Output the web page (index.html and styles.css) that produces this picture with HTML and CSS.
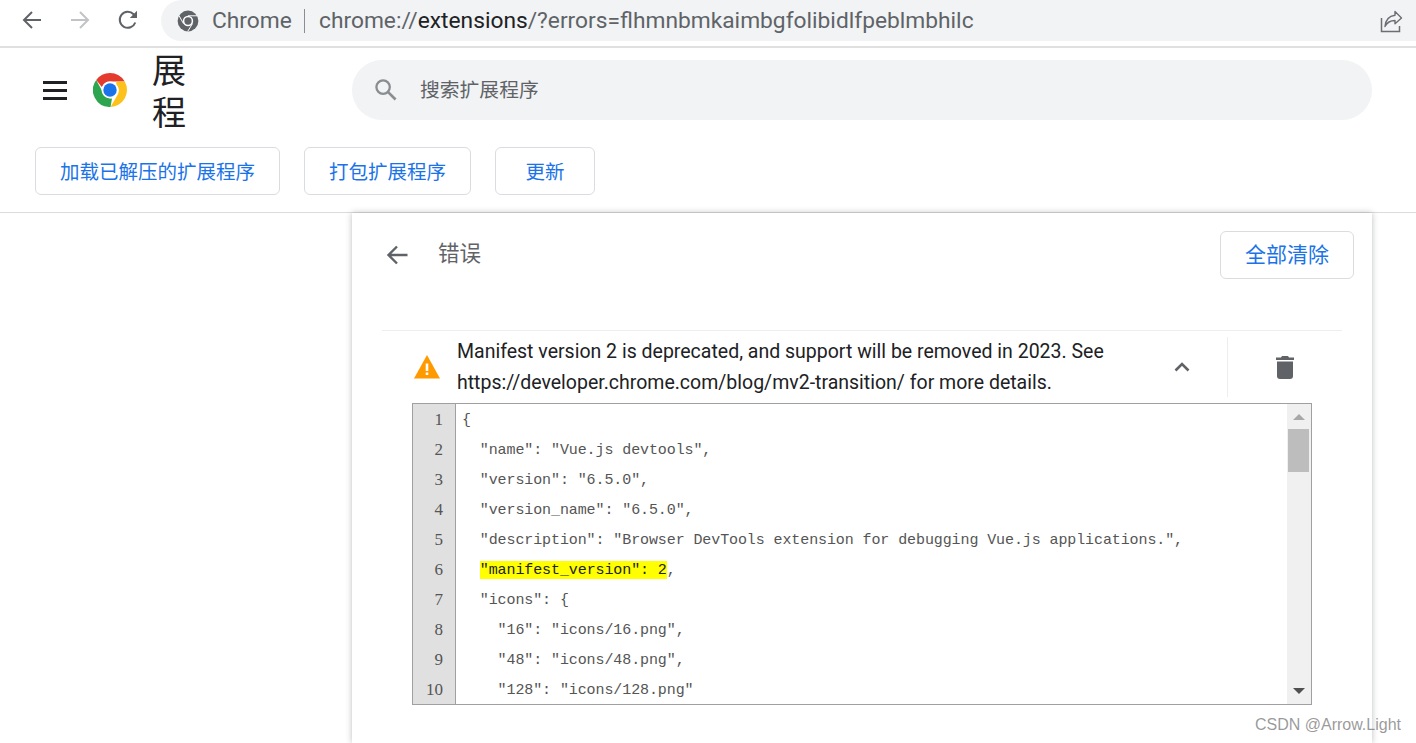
FILE: index.html
```html
<!DOCTYPE html>
<html lang="zh">
<head>
<meta charset="utf-8">
<title>扩展程序</title>
<link rel="stylesheet" href="styles.css">
</head>
<body>
<div class="browser-bar">
  <div class="nav">
    <svg class="nav-icon" viewBox="0 0 24 24"><path d="M21 12H4.500M12 4l-8 8 8 8" fill="none" stroke="#5f6368" stroke-width="2"/></svg>
    <svg class="nav-icon" viewBox="0 0 24 24"><path d="M3 12h16.500M12 4l8 8-8 8" fill="none" stroke="#c1c3c6" stroke-width="2"/></svg>
    <svg class="nav-icon" viewBox="0 0 24 24"><path d="M19.300 14.500A8 8 0 1 1 17.600 6.300L20 8.600" fill="none" stroke="#5f6368" stroke-width="2"/><path d="M21 2.800V10h-7.200z" fill="#5f6368"/></svg>
  </div>
  <div class="omnibox">
    <svg class="omni-logo" viewBox="0 0 36 36">
      <circle cx="18" cy="18" r="17" fill="#5f6368"/>
      <circle cx="18" cy="18" r="8.500" fill="#fff"/>
      <circle cx="18" cy="18" r="6" fill="#5f6368"/>
      <path d="M18 9.500H33M10.600 22.300L3.500 9.500M25.400 22.300L17.500 35" stroke="#fff" stroke-width="1.600" fill="none"/>
    </svg>
    <span class="omni-site">Chrome</span>
    <span class="omni-sep"></span>
    <span class="omni-url">chrome://<b>extensions</b>/?errors=flhmnbmkaimbgfolibidlfpeblmbhilc</span>
    <svg class="share" viewBox="0 0 24 24"><path d="M2.500 9V22.500H20.500V17" fill="none" stroke="#6b6e72" stroke-width="1.500"/><path d="M16 2.500l6.500 6.500-6.500 5.800V11.500C11 11.500 8 13.500 6 17.500 6.500 11 10 7 16 6.200z" fill="none" stroke="#6b6e72" stroke-width="1.400" stroke-linejoin="round"/></svg>
  </div>
</div>

<header class="header">
  <div class="header-top">
    <svg class="menu" viewBox="0 0 24 19"><path d="M0 0h24v3H0zM0 8h24v3H0zM0 16h24v3H0z" fill="#202124"/></svg>
    <svg class="logo" viewBox="1 1 34 34">
      <path d="M18 1a17 17 0 0 1 14.700 8.500H18a8.500 8.500 0 0 0-8 5.700L4.200 8A17 17 0 0 1 18 1z" fill="#e53b2e"/>
      <path d="M32.700 9.500A17 17 0 0 1 18.500 35l7-12a8.500 8.500 0 0 0-1.200-10.500V9.500z" fill="#fcc21b"/>
      <path d="M4.200 8L11 20.500a8.500 8.500 0 0 0 9 6L18.500 35A17 17 0 0 1 4.200 8z" fill="#2da44e"/>
      <circle cx="18" cy="18" r="8.500" fill="#fff"/>
      <circle cx="18" cy="18" r="6.700" fill="#1a73e8"/>
    </svg>
    <h1 class="title">展程</h1>
    <div class="search">
      <svg class="search-icon" viewBox="0 0 24 24"><circle cx="9.500" cy="9.500" r="7" fill="none" stroke="#8a8d91" stroke-width="2.400"/><path d="M14.500 14.500l8 8" stroke="#8a8d91" stroke-width="2.800"/></svg>
      <span class="search-text">搜索扩展程序</span>
    </div>
  </div>
  <div class="actions">
    <button class="btn">加载已解压的扩展程序</button>
    <button class="btn">打包扩展程序</button>
    <button class="btn">更新</button>
  </div>
</header>

<main class="main">
  <section class="card">
    <div class="card-head">
      <svg class="back" viewBox="0 0 24 24"><path d="M22.500 12H3.500M12 3.500L3.500 12l8.500 8.500" fill="none" stroke="#5f6368" stroke-width="2.400"/></svg>
      <h2 class="card-title">错误</h2>
      <button class="btn btn-clear">全部清除</button>
    </div>
    <div class="item">
      <svg class="warn" viewBox="0 0 26 24"><path d="M13 .500L26 24H0z" fill="#f90"/><path d="M11.700 9h2.600v7.500h-2.600zM11.700 18h2.600v2.600h-2.600z" fill="#fff"/></svg>
      <p class="message">Manifest version 2 is deprecated, and support will be removed in 2023. See https://developer.chrome.com/blog/mv2-transition/ for more details.</p>
      <div class="chevron-cell">
        <svg class="chevron" viewBox="0 0 16 10"><path d="M1.500 8.500L8 2l6.500 6.500" fill="none" stroke="#5f6368" stroke-width="2.600"/></svg>
      </div>
      <div class="trash-cell">
        <svg class="trash" viewBox="0 0 18 24"><path d="M6 1h6l1 1.500h5v2.500H0V2.500h5z" fill="#5f6368"/><path d="M1 6.500h16V21a3 3 0 0 1-3 3H4a3 3 0 0 1-3-3z" fill="#5f6368"/></svg>
      </div>
    </div>
    <div class="code-box">
      <ol class="gutter">
        <li>1</li><li>2</li><li>3</li><li>4</li><li>5</li><li>6</li><li>7</li><li>8</li><li>9</li><li>10</li>
      </ol>
      <div class="code">
        <div class="line">{</div>
        <div class="line">  "name": "Vue.js devtools",</div>
        <div class="line">  "version": "6.5.0",</div>
        <div class="line">  "version_name": "6.5.0",</div>
        <div class="line">  "description": "Browser DevTools extension for debugging Vue.js applications.",</div>
        <div class="line">  <mark class="hl">"manifest_version": 2</mark>,</div>
        <div class="line">  "icons": {</div>
        <div class="line">    "16": "icons/16.png",</div>
        <div class="line">    "48": "icons/48.png",</div>
        <div class="line">    "128": "icons/128.png"</div>
      </div>
      <div class="scrollbar">
        <span class="arrow-up"></span>
        <span class="thumb"></span>
        <span class="arrow-down"></span>
      </div>
    </div>
  </section>
</main>
<div class="watermark">CSDN @Arrow.Light</div>
</body>
</html>
```

FILE: styles.css
```css
* { box-sizing: border-box; }
html, body { margin: 0; height: 743px; overflow: hidden; background: #fff; }
body { font-family: Roboto, "Noto Sans CJK SC", sans-serif; color: #202124; position: relative; display: flex; flex-direction: column; }
svg { display: block; flex: none; }

.browser-bar { height: 48px; border-bottom: 2px solid #e0e0e0; display: flex; align-items: flex-start; flex: none; }
.nav { width: 161px; padding: 8px 0 0 20px; display: flex; gap: 24px; flex: none; }
.nav-icon { width: 24px; height: 24px; }
.omnibox { flex: 1; height: 41px; background: #f1f3f4; border-radius: 21px 0 0 21px; display: flex; align-items: center; padding-left: 16px; font-size: 22.75px; color: #5f6368; }
.omni-logo { width: 22px; height: 22px; margin-right: 13px; }
.omni-site { width: 80px; }
.omni-sep { width: 1px; height: 24px; background: #8a8d91; margin: 0 14px 0 12px; }
.omni-url { flex: 1; white-space: nowrap; }
.omni-url b { font-weight: 400; color: #202124; }
.share { width: 24px; height: 24px; margin-right: 13px; }

.header { height: 165px; border-bottom: 1px solid #dcdcdc; flex: none; }
.header-top { height: 84px; margin-bottom: 15px; display: flex; align-items: center; padding-left: 43px; }
.menu { width: 24px; height: 19px; margin-right: 26px; }
.logo { width: 34px; height: 34px; margin-right: 25px; }
.title { width: 34px; margin: 0 166px 0 0; font-size: 34px; line-height: 42px; font-weight: 400; color: #202124; font-family: "Noto Sans CJK SC", sans-serif; }
.search { width: 1020px; height: 60px; border-radius: 30px; background: #f1f3f4; display: flex; align-items: center; padding-left: 22px; font-size: 19.8px; color: #5f6368; font-family: "Noto Sans CJK SC", sans-serif; }
.search-icon { width: 23px; height: 23px; margin-right: 23px; margin-top: -2px; }
.search-text { padding-bottom: 3px; }
.actions { display: flex; gap: 24px; padding-left: 35px; }
.btn { height: 48px; min-width: 100px; padding: 0 24px 2px; background: #fff; border: 1px solid #dadce0; border-radius: 6px; font: 400 19.5px "Noto Sans CJK SC", sans-serif; color: #1a73e8; white-space: nowrap; }

.main { flex: 1; padding-left: 352px; min-height: 0; }
.card { width: 1020px; height: 100%; background: #fff; box-shadow: 0 0 6px rgba(60, 64, 67, .35); padding: 18px 30px 0; }
.card-head { height: 100px; display: flex; align-items: flex-start; border-bottom: 1px solid #eeeeee; }
.back { width: 24px; height: 24px; margin: 12px 0 0 3px; }
.card-title { margin: 6px auto 0 29px; font: 400 21.5px/30px "Noto Sans CJK SC", sans-serif; color: #5f6368; }
.btn-clear { margin-right: -12px; font-size: 21px; padding-bottom: 4px; }

.item { height: 72px; display: flex; align-items: center; padding-left: 32px; position: relative; }
.warn { width: 26px; height: 25px; margin-right: 17px; margin-top: -1px; }
.message { width: 680px; margin: 0; font-size: 19.5px; line-height: 31px; color: #202124; flex: none; }
.chevron-cell { width: 90px; height: 60px; display: flex; align-items: center; padding-left: 37px; }
.chevron { width: 16px; height: 10px; }
.trash-cell { width: 116px; height: 60px; border-left: 1px solid #eeeeee; display: flex; align-items: center; padding-left: 48px; margin-left: 1px; }
.trash { width: 18px; height: 24px; }

.code-box { width: 900px; height: 302px; margin-left: 30px; border: 1px solid #a0a0a0; display: flex; overflow: hidden; }
.gutter { width: 43px; margin: 0; padding: 1px 12px 0 0; list-style: none; background: #e0e0e0; border-right: 1px solid #a0a0a0; text-align: right; font: 17px/30px "Liberation Serif", serif; color: #555; flex: none; }
.gutter li { height: 30px; }
.code { flex: 1; padding: 2px 0 0 6px; font: 15px/30px "Liberation Mono", monospace; letter-spacing: -.1px; color: #555; overflow: hidden; }
.line { height: 30px; white-space: pre; }
.hl { background: #ffff00; color: #222; padding: 1px 0 0; }
.scrollbar { width: 24px; background: #f0f0f0; position: relative; display: flex; flex-direction: column; align-items: flex-start; flex: none; }
.arrow-up { margin: 10px 0 0 6px; border: 6px solid transparent; border-top: 0; border-bottom: 6px solid #a8a8a8; }
.thumb { width: 21px; height: 43px; margin: 9px 0 0 1px; background: #bdbdbd; }
.arrow-down { margin: auto 0 10px 6px; border: 6px solid transparent; border-bottom: 0; border-top: 6px solid #505050; }

.watermark { position: absolute; right: 15px; bottom: 9px; font: 16px "Liberation Sans", sans-serif; color: rgba(120, 120, 120, .75); }
```
